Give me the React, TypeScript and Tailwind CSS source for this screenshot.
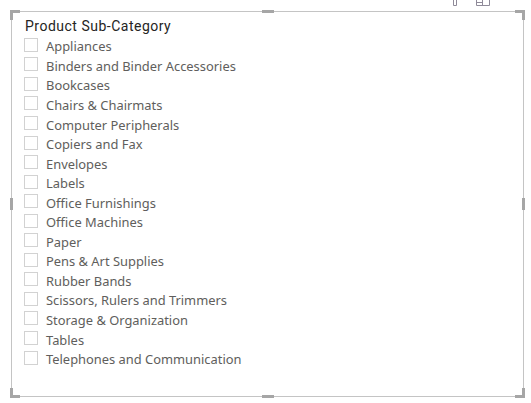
const items = [
  'Appliances',
  'Binders and Binder Accessories',
  'Bookcases',
  'Chairs & Chairmats',
  'Computer Peripherals',
  'Copiers and Fax',
  'Envelopes',
  'Labels',
  'Office Furnishings',
  'Office Machines',
  'Paper',
  'Pens & Art Supplies',
  'Rubber Bands',
  'Scissors, Rulers and Trimmers',
  'Storage & Organization',
  'Tables',
  'Telephones and Communication',
]

function Corner({ className, d }: { className: string; d: string }) {
  return (
    <svg width="10" height="10" viewBox="0 0 10 10" className={`absolute ${className}`}>
      <path d={d} fill="#a6a6a6" />
    </svg>
  )
}

export default function App() {
  return (
    <div className="relative h-[403px] w-[531px] overflow-hidden bg-white p-[11px] font-['Noto_Sans',sans-serif]">
      {/* toolbar icons cut off at the top */}
      <svg width="40" height="7" viewBox="0 0 40 7" className="absolute left-[452px] top-0" fill="none" stroke="#8f8a99">
        <path d="M1.5 0V5.5H4.5V0" />
        <path d="M24.5 0V5.5H37.5V0M24.5 2.5H30.5M30.5 0V5.5" />
      </svg>

      <div className="relative h-[386px] w-[513px] border border-[#c4c4c4] pl-[12px] pt-[5px]">
        <Corner className="-left-[2px] -top-[2px]" d="M0 0H10V3H3V10H0Z" />
        <Corner className="-right-[2px] -top-[2px]" d="M0 0H10V10H7V3H0Z" />
        <Corner className="-bottom-[2px] -left-[2px]" d="M0 0H3V7H10V10H0Z" />
        <Corner className="-bottom-[2px] -right-[2px]" d="M7 0H10V10H0V7H7Z" />
        <div className="absolute left-[250px] top-[-2px] h-[3px] w-[12px] bg-[#a6a6a6]" />
        <div className="absolute bottom-[-2px] left-[250px] h-[3px] w-[12px] bg-[#a6a6a6]" />
        <div className="absolute left-[-2px] top-[186px] h-[12px] w-[3px] bg-[#a6a6a6]" />
        <div className="absolute right-[-2px] top-[186px] h-[12px] w-[3px] bg-[#a6a6a6]" />

        <h2 className="mb-[1px] ml-px h-[19px] font-['Roboto',sans-serif] text-[14px] leading-[19px] font-normal tracking-[0.5px] text-[#252423]">
          Product Sub-Category
        </h2>
        <ul className="flex flex-col">
          {items.map(item => (
            <li key={item} className="flex h-[19.56px] items-center gap-[8px]">
              <span className="mb-[4px] h-[14px] w-[14px] shrink-0 border border-[#d2d2d2] bg-white" />
              <span className="text-[12.9px] leading-none whitespace-nowrap text-[#605e5c]">{item}</span>
            </li>
          ))}
        </ul>
      </div>
    </div>
  )
}
